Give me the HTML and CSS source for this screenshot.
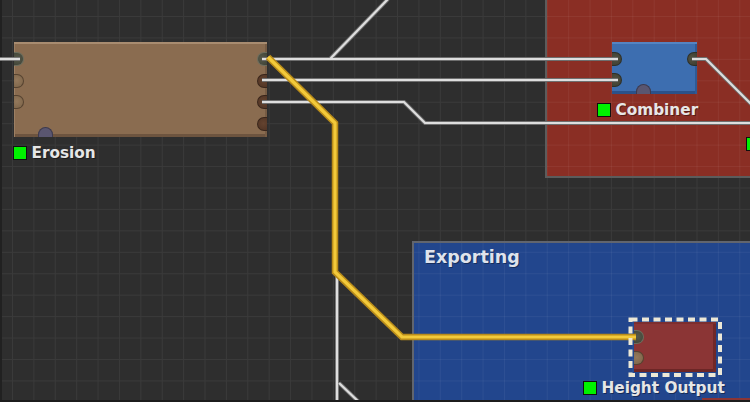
FILE: index.html
```html
<!DOCTYPE html>
<html lang="en">
<head>
    <meta charset="UTF-8">
    <title>Graph Editor</title>
    <link rel="stylesheet" href="styles.css">
</head>
<body>
    <div class="graph">
        <div class="group group-red"></div>
        <div class="group group-blue">
            <div class="group-title">Exporting</div>
        </div>

        <div class="node erosion">
            <div class="node-box">
                <div class="ports ports-in">
                    <span class="port in linked"></span>
                    <span class="port in free"></span>
                    <span class="port in free"></span>
                </div>
                <div class="ports ports-out">
                    <span class="port out linked"></span>
                    <span class="port out used"></span>
                    <span class="port out used"></span>
                    <span class="port out used"></span>
                </div>
                <span class="port-bottom"></span>
            </div>
            <div class="node-label"><span class="state"></span>Erosion</div>
        </div>

        <div class="node combiner">
            <div class="node-box">
                <div class="ports ports-in">
                    <span class="port in linked"></span>
                    <span class="port in linked"></span>
                </div>
                <div class="ports ports-out">
                    <span class="port out linked"></span>
                </div>
                <span class="port-bottom"></span>
            </div>
            <div class="node-label"><span class="state"></span>Combiner</div>
        </div>

        <div class="node offscreen">
            <div class="node-label"><span class="state"></span></div>
        </div>

        <div class="node height-output">
            <div class="node-box">
                <div class="ports ports-in">
                    <span class="port in linked"></span>
                    <span class="port in free"></span>
                </div>
            </div>
            <div class="node-label"><span class="state"></span>Height Output</div>
        </div>

        <div class="node peek"><div class="node-box"></div></div>

        <svg class="wires" width="750" height="402" viewBox="0 0 750 402">
            <defs>
                <g id="links">
                    <path d="M0 59 H20" />
                    <path d="M262 59 H618" />
                    <path d="M388 -1 L330 59" />
                    <path d="M262 80 H618" />
                    <path d="M262 102 H404 L425 123 H752" />
                    <path d="M692 59 H706 L752 105" />
                    <path d="M337 272 V404" />
                    <path d="M339 383 L361 404" />
                </g>
                <path id="active" d="M268 57 L335 123 V272 L402 337 H636" />
            </defs>
            <use class="wire-edge" href="#links" />
            <use class="wire" href="#links" />
            <use class="active-edge" href="#active" />
            <use class="active" href="#active" />
            <rect class="selection" x="630.5" y="319.5" width="89.5" height="55.5" />
        </svg>
    </div>
</body>
</html>
```

FILE: styles.css
```css
* {
    box-sizing: border-box;
}
body {
    margin: 0;
    background: #2e2e2e;
    font-family: "DejaVu Sans", Verdana, sans-serif;
}
.graph {
    position: relative;
    width: 750px;
    height: 402px;
    overflow: hidden;
    background-color: #2e2e2e;
    background-image:
        linear-gradient(to right, #3a3a3a 1px, transparent 1px),
        linear-gradient(to bottom, #3a3a3a 1px, transparent 1px);
    background-size: 21.4px 21.45px;
    background-position: 12px 16px;
    background-attachment: fixed;
    box-shadow: inset 2px 0 0 #212121;
}
.graph::after {
    content: "";
    position: absolute;
    left: 0;
    right: 0;
    bottom: 0;
    height: 2px;
    background: #1c1c1c;
}

/* groups */
.group {
    position: absolute;
    border: 2px solid #5c5c5c;
    background-image:
        linear-gradient(to right, rgba(255,255,255,0.05) 1px, transparent 1px),
        linear-gradient(to bottom, rgba(255,255,255,0.05) 1px, transparent 1px);
    background-size: 21.4px 21.45px;
    background-position: 12px 16px;
    background-attachment: fixed;
}
.group-red {
    left: 545px;
    top: -4px;
    width: 220px;
    height: 182px;
    background-color: #8a2e24;
}
.group-blue {
    left: 412px;
    top: 241px;
    width: 350px;
    height: 170px;
    background-color: #22468d;
    border-color: #61656e;
}
.group-title {
    padding: 4px 0 0 10px;
    font-size: 17.5px;
    font-weight: bold;
    color: #dfe3ec;
    text-shadow: 1px 1px 0 rgba(0,0,0,0.35);
}

/* nodes */
.node {
    position: absolute;
    display: flex;
    flex-direction: column;
    align-items: flex-start;
    gap: 8px;
}
.node-box {
    position: relative;
    display: flex;
    justify-content: space-between;
    align-items: flex-start;
}
.ports {
    display: flex;
    flex-direction: column;
    gap: 7px;
    padding-top: 10px;
}
.port {
    display: block;
    width: 10px;
    height: 14px;
    border: 1px solid #2f2f28;
}
.port.in {
    border-left: none;
    border-radius: 0 7px 7px 0;
}
.port.out {
    border-right: none;
    border-radius: 7px 0 0 7px;
}
.port.linked {
    background: radial-gradient(circle at 40% 45%, #56594a, #3f4236);
    border-color: #6b6d5d;
}
.port.free {
    background: radial-gradient(circle at 30% 45%, #94795c, #7a6247);
    border-color: #564330;
}
.port.used {
    background: radial-gradient(circle at 60% 45%, #64432f, #4f3324);
    border-color: #3a261b;
}
.port-bottom {
    position: absolute;
    left: 24px;
    bottom: 0;
    width: 15px;
    height: 10px;
    border-radius: 8px 8px 0 0;
    background: #5a5670;
    border: 1px solid #3d3a4e;
    border-bottom: none;
}

.erosion {
    left: 14px;
    top: 42px;
}
.erosion .node-box {
    width: 253px;
    height: 95px;
    background: #8a6c50;
    box-shadow:
        inset 0 2px 0 #a88c70,
        inset 1px 0 0 #9c7f63,
        inset -2px 0 0 #775c44,
        inset 0 -3px 0 #6d543f;
}
.erosion .ports {
    gap: 7.5px;
}
.erosion .node-label {
    margin-left: -1px;
}

.combiner {
    left: 612px;
    top: 42px;
}
.combiner .node-box {
    width: 85px;
    height: 52px;
    background: #3d6eb0;
    box-shadow:
        inset 0 2px 0 #5584c2,
        inset -2px 0 0 #2f5a95,
        inset 0 -3px 0 #2b5189;
}
.combiner .port.linked {
    background: radial-gradient(circle at 40% 45%, #525241, #3c3c31);
    border-color: #2f3026;
}
.combiner .node-label {
    margin-left: -15px;
}

.offscreen {
    left: 746px;
    top: 137px;
}

.height-output {
    left: 634px;
    top: 322px;
}
.height-output .node-box {
    width: 82px;
    height: 50px;
    background: #8b3535;
    box-shadow:
        inset 0 2px 0 #7c2e2e,
        inset -3px 0 0 #702828,
        inset 0 -3px 0 #6c2626;
}
.height-output .ports {
    padding-top: 8px;
}
.height-output .node-label {
    margin-left: -51px;
}

.peek {
    left: 702px;
    top: 398px;
}
.peek .node-box {
    width: 60px;
    height: 10px;
    background: #8b3535;
}

.node-label {
    display: flex;
    align-items: center;
    gap: 4.5px;
    font-size: 15.3px;
    font-weight: bold;
    line-height: 16px;
    color: #e6e6e6;
    white-space: nowrap;
    text-shadow: 1px 1px 0 rgba(0,0,0,0.4);
}
.state {
    display: block;
    width: 14px;
    height: 14px;
    background: #00f200;
    border: 1px solid #101010;
}

/* wires */
.wires {
    position: absolute;
    left: 0;
    top: 0;
    pointer-events: none;
}
.wires use {
    fill: none;
}
.wire-edge {
    stroke: #6e6e6e;
    stroke-width: 4;
}
.wire {
    stroke: #dedede;
    stroke-width: 2.2;
}
.active-edge {
    stroke: #b98c1a;
    stroke-width: 6.5;
}
.active {
    stroke: #f3ca3a;
    stroke-width: 3.2;
}
.selection {
    fill: none;
    stroke: #ece8d6;
    stroke-width: 4;
    stroke-dasharray: 7 4.5;
}
```
